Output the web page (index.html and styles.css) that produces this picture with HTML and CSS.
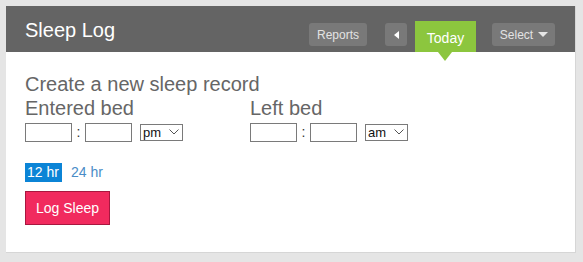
FILE: index.html
```html
<!DOCTYPE html>
<html>
<head>
<meta charset="utf-8">
<link rel="stylesheet" href="styles.css">
</head>
<body>
<div class="card">
  <div class="header">
    <h1 class="title">Sleep Log</h1>
    <div class="actions">
      <button class="hbtn reports">Reports</button>
      <button class="hbtn prev"><svg width="5" height="8" viewBox="0 0 5 8"><path d="M5 0 L0 4 L5 8 Z" fill="#fff"/></svg></button>
      <button class="today">Today</button>
      <button class="hbtn select">Select <svg width="10" height="5" viewBox="0 0 10 5"><path d="M0 0 H10 L5 5 Z" fill="#e6e6e6"/></svg></button>
    </div>
  </div>
  <div class="content">
    <div class="heading">Create a new sleep record</div>
    <div class="cols">
      <div class="col">
        <div class="heading">Entered bed</div>
        <div class="time-row">
          <input class="tinput" type="text">
          <span class="colon">:</span>
          <input class="tinput" type="text">
          <span class="sel-wrap">
            <select class="ampm"><option>pm</option><option>am</option></select>
            <svg class="chev" width="10" height="6" viewBox="0 0 10 6"><path d="M0.5 0.5 L5 5 L9.5 0.5" fill="none" stroke="#555" stroke-width="1"/></svg>
          </span>
        </div>
      </div>
      <div class="col">
        <div class="heading">Left bed</div>
        <div class="time-row">
          <input class="tinput" type="text">
          <span class="colon">:</span>
          <input class="tinput" type="text">
          <span class="sel-wrap">
            <select class="ampm"><option>am</option><option>pm</option></select>
            <svg class="chev" width="10" height="6" viewBox="0 0 10 6"><path d="M0.5 0.5 L5 5 L9.5 0.5" fill="none" stroke="#555" stroke-width="1"/></svg>
          </span>
        </div>
      </div>
    </div>
    <div class="format">
      <span class="fmt active">12 hr</span>
      <span class="fmt">24 hr</span>
    </div>
    <button class="log">Log Sleep</button>
  </div>
</div>
</body>
</html>
```
FILE: styles.css
```css
* { box-sizing: border-box; }
html, body { margin: 0; padding: 0; }
body {
  background: #e5e5e5;
  font-family: "Liberation Sans", Arial, sans-serif;
  width: 583px;
  height: 262px;
  padding: 6px 0 0 6px;
}
.card {
  width: 570px;
  height: 247px;
  background: #fff;
  border-right: 1px solid #d6d6d6;
  border-bottom: 1px solid #d6d6d6;
  display: flex;
  flex-direction: column;
}
.header {
  height: 46px;
  background: #646464;
  display: flex;
  justify-content: space-between;
  padding: 0 20px 0 19px;
}
.title {
  margin: 13px 0 0 0;
  font-size: 20px;
  line-height: 23px;
  font-weight: normal;
  color: #fff;
}
.actions {
  display: flex;
  align-items: flex-end;
}
.hbtn {
  height: 23px;
  margin: 0 0 6px 0;
  border: 0;
  border-radius: 3px;
  background: #797979;
  color: #e3e3e3;
  font-family: "Liberation Sans", Arial, sans-serif;
  font-size: 12px;
  padding: 0;
  display: flex;
  align-items: center;
  justify-content: center;
}
.reports { width: 58px; }
.prev { width: 22px; margin-left: 18px; }
.select { width: 63px; margin-left: 16px; gap: 5px; padding-left: 1px; }
.today {
  position: relative;
  width: 61px;
  height: 31px;
  margin-left: 8px;
  border: 0;
  padding: 3px 0 0 0;
  background: #8cc63e;
  color: #fff;
  font-family: "Liberation Sans", Arial, sans-serif;
  font-size: 14px;
}
.today::after {
  content: "";
  position: absolute;
  left: 23px;
  bottom: -9px;
  border-left: 7px solid transparent;
  border-right: 7px solid transparent;
  border-top: 9px solid #8cc63e;
}
.content {
  padding: 20px 0 0 19px;
}
.heading {
  font-size: 20px;
  line-height: 24px;
  color: #666;
}
.cols {
  display: grid;
  grid-template-columns: 225px auto;
}
.time-row {
  display: flex;
  align-items: center;
  margin-top: 3px;
  height: 19px;
}
.tinput {
  width: 47px;
  height: 19px;
  border: 1px solid #7a7a7a;
  padding: 0;
  margin: 0;
  background: #fff;
}
.colon {
  width: 13px;
  text-align: center;
  font-size: 14px;
  color: #333;
  line-height: 19px;
}
.sel-wrap {
  position: relative;
  margin-left: 8px;
  display: flex;
}
.ampm {
  appearance: none;
  -webkit-appearance: none;
  width: 43px;
  height: 17px;
  border: 1px solid #7a7a7a;
  border-radius: 0;
  background: #fff;
  font-family: "Liberation Sans", Arial, sans-serif;
  font-size: 13px;
  color: #111;
  padding: 0 0 0 2px;
  margin: 0;
  line-height: 15px;
}
.chev {
  position: absolute;
  right: 4px;
  top: 5px;
  pointer-events: none;
}
.format {
  margin-top: 21px;
  display: flex;
  align-items: center;
  gap: 9px;
  height: 19px;
}
.fmt {
  font-size: 14px;
  line-height: 19px;
  color: #4a8cc7;
}
.fmt.active {
  background: #0b84d6;
  color: #fff;
  padding: 0 3px 0 2px;
}
.log {
  margin-top: 9px;
  width: 85px;
  height: 34px;
  background: #f12a5e;
  border: 1px solid #a8173f;
  color: #fff;
  font-family: "Liberation Sans", Arial, sans-serif;
  font-size: 14px;
  padding: 0;
}
```
